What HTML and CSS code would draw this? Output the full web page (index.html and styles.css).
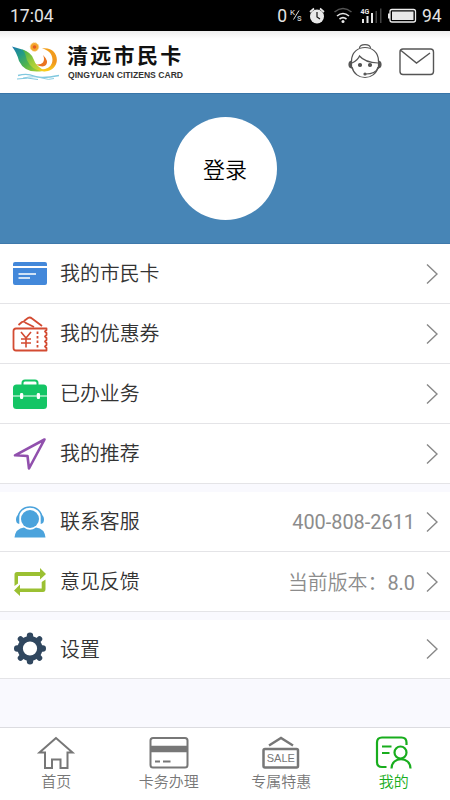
FILE: index.html
```
<!DOCTYPE html>
<html lang="zh-CN">
<head>
<meta charset="utf-8">
<title>清远市民卡</title>
<link rel="stylesheet" href="styles.css">
</head>
<body>
<div class="status">
  <span class="time">17:04</span>
  <span class="rate">0</span>
  <svg class="status-icons" width="129" height="31" viewBox="0 0 129 31">
    <g fill="#e8e8e8" font-family="Roboto, sans-serif">
      <text x="1" y="15" font-size="8">K</text><text x="8" y="21" font-size="9">s</text>
      <path d="M4.500 19.500L10 10.500" stroke="#ddd"/>
      <circle cx="28" cy="16.500" r="7"/>
      <path d="M21 12L25 8.500M31 8.500L35 12" stroke="#e8e8e8" stroke-width="1.700"/>
      <path d="M28 12V17L31 19" fill="none" stroke="#111" stroke-width="1.200"/>
      <g fill="none" stroke-width="1.600"><path d="M45.500 12Q54 5 62.500 12" stroke="#555"/><path d="M48 16Q54 11 60 16M50.500 19Q54 16.300 57.500 19" stroke="#e8e8e8"/></g>
      <circle cx="54" cy="21.500" r="1.500"/>
      <text x="71.500" y="14" font-size="7" font-weight="bold">4G</text>
      <path d="M73 19h2v4h-2zM77.500 16h2v7h-2zM82 13h2v10h-2z"/><path d="M86.500 11h1.500v12h-1.500zM91 8.500h1.500v14.500h-1.500z" fill="#444"/>
      <rect x="101" y="9.500" width="25.500" height="12.500" rx="2" fill="none" stroke="#eee" stroke-width="1.300"/>
      <rect x="103" y="11.500" width="21.500" height="8.500"/><path d="M99 13.500h2v5h-2z"/>
    </g>
  </svg>
  <span class="level">94</span>
</div>
<header class="header">
  <svg class="logo" width="50" height="42" viewBox="0 0 50 42">
    <defs>
      <linearGradient id="leaf" x1="0" y1="0" x2="1" y2="1"><stop offset="0" stop-color="#1c78b0"/><stop offset=".3" stop-color="#239b87"/><stop offset=".6" stop-color="#52b54a"/><stop offset="1" stop-color="#bdd629"/></linearGradient>
      <linearGradient id="leaf2" x1="0" y1="0" x2="1" y2="1"><stop offset="0" stop-color="#3fae4c"/><stop offset=".5" stop-color="#9ccc3a"/><stop offset="1" stop-color="#e3dc2c"/></linearGradient>
      <linearGradient id="sun" x1="0" y1="0" x2="0" y2="1"><stop offset="0" stop-color="#f2a01d"/><stop offset=".6" stop-color="#f0951d"/><stop offset="1" stop-color="#fad01d"/></linearGradient>
    </defs>
    <path d="M1 5.500L13 9Q18 14 20 20Q23 27 32 30Q14 33 8 20Q6 12 1 5.500Z" fill="url(#leaf)"/>
    <path d="M11 8.500Q20 11 22.500 18Q25 26 35 30Q25 31 19 24Q15 19 14.500 14Q13.500 10.500 11 8.500Z" fill="url(#leaf2)"/>
    <path d="M31 7.500C48 5 51 26 37 30Q31 31.500 26 28Q38 30 41 22C43 14 38 9 31 7.500Z" fill="url(#sun)"/>
    <path d="M32 14Q38 20 35 24Q32 27 25 23.500Q30 24 32 21.500Q34 18 32 14Z" fill="#ea7420"/>
    <circle cx="23.500" cy="6" r="4.200" fill="#f4a52b" stroke="#f8cf79" stroke-width="1" stroke-dasharray="1.500 1"/><circle cx="23.500" cy="6" r="1.800" fill="#e45b20"/>
    <g fill="none" stroke="#80c8df" stroke-width="1.300"><path d="M7 34.500Q16 32 23 35T48 34.500"/><path d="M12 37Q24 34.500 31 37T43 37.500" stroke-width=".9"/><path d="M6 38Q17 36 27 38.500" stroke-width="1"/></g>
  </svg>
  <div class="brand"><div class="brand-cn">清远市民卡</div><div class="brand-en">QINGYUAN CITIZENS CARD</div></div>
  <svg class="agent" width="34" height="38" viewBox="0 0 34 38" fill="none" stroke="#555" stroke-width="1.200">
    <path d="M11.500 5C12 .500 22 .500 22.500 5"/><path d="M3.500 18C3.500 0 30.500 0 30.500 18M4 24C7 38 27 38 30 24"/>
    <path d="M4 20Q10 17 11.500 13Q17 19.500 30 20"/>
    <path d="M3.500 18V25Q1 24.500 1 21.500T3.500 18ZM30.500 18V25Q33 24.500 33 21.500T30.500 18Z" fill="#555"/>
    <circle cx="12" cy="22" r="1.500" fill="#555"/><circle cx="22" cy="22" r="1.500" fill="#555"/><path d="M30.500 25Q27 31 18 31"/><circle cx="17" cy="31" r="1" fill="#555"/>
  </svg>
  <svg class="mail" width="36" height="28" viewBox="0 0 36 28" fill="none" stroke="#555" stroke-width="1.400"><rect x="1" y="1" width="33.500" height="25.500" rx="3"/><path d="M2 2.500L17.500 15L31 5"/></svg>
</header>
<section class="hero"><button class="login">登录</button></section>
<main>
  <div class="group">
    <div class="row">
      <svg class="icon" viewBox="0 0 36 36"><path d="M1 10V8Q1 6 3 6H33Q35 6 35 8V10ZM1 12H35V27Q35 29 33 29H3Q1 29 1 27Z" fill="#4388da"/><path d="M6.500 18H24M6.500 22H18" stroke="#fff" stroke-width="1.700"/></svg>
      <span class="label">我的市民卡</span><svg class="chev" viewBox="0 0 12 20"><path d="M1 0.500L11 10L1 19.500"/></svg>
    </div>
    <div class="row">
      <svg class="icon" viewBox="0 0 36 36" fill="none" stroke="#d34b32" stroke-width="1.800" stroke-linejoin="round"><path d="M6.500 9L10 6Q12 5 14 7L22 11M12 5L16 2Q18 .700 20 2.500L30 10"/><path d="M34.500 12.500H4Q1.500 12.500 1.500 15V32Q1.500 34.500 4 34.500H34.500V32L33 30.500L34.500 29V27L33 25.500L34.500 24V22L33 20.500L34.500 19V17L33 15.500L34.500 14Z"/><path d="M9 16L14 22L19 16M14 22V31.500M9 23H19M9 27H19" stroke-width="1.600"/><path d="M25.500 15.500V33" stroke-dasharray="2.500 2"/></svg>
      <span class="label">我的优惠券</span><svg class="chev" viewBox="0 0 12 20"><path d="M1 0.500L11 10L1 19.500"/></svg>
    </div>
    <div class="row">
      <svg class="icon" viewBox="0 0 36 36"><path d="M10.500 10V7Q10.500 4.500 13 4.500H23Q25.500 4.500 25.500 7V10" fill="none" stroke="#14c565" stroke-width="2"/><rect x="1" y="8.500" width="34" height="24.500" rx="3.500" fill="#14c565"/><path d="M1 20H35" stroke="#fff" stroke-width="1.200"/><rect x="8" y="17" width="3.200" height="6" rx="1.200" fill="#fff"/><rect x="24.800" y="17" width="3.200" height="6" rx="1.200" fill="#fff"/></svg>
      <span class="label">已办业务</span><svg class="chev" viewBox="0 0 12 20"><path d="M1 0.500L11 10L1 19.500"/></svg>
    </div>
    <div class="row">
      <svg class="icon" viewBox="0 0 36 36"><path d="M32.500 3.500L3 19.300L15.500 20L17 32.500Z" fill="none" stroke="#9150ad" stroke-width="2.600" stroke-linejoin="round"/></svg>
      <span class="label">我的推荐</span><svg class="chev" viewBox="0 0 12 20"><path d="M1 0.500L11 10L1 19.500"/></svg>
    </div>
  </div>
  <div class="group">
    <div class="row">
      <svg class="icon" viewBox="0 0 36 36" fill="#4ba3dc"><circle cx="18" cy="15" r="9"/><path d="M6 15C6-1 30-1 30 15" fill="none" stroke="#4ba3dc" stroke-width="1.600"/><path d="M7.300 10.500V20Q4 19.500 4 15.500T7.300 10.500ZM28.700 10.500V20Q32 19.500 32 15.500T28.700 10.500ZM2.500 33.500Q3.500 24.500 12 23.500Q18 28 24 23.500Q32.500 24.500 33.500 33.500Z"/></svg>
      <span class="label">联系客服</span><span class="value">400-808-2611</span><svg class="chev" viewBox="0 0 12 20"><path d="M1 0.500L11 10L1 19.500"/></svg>
    </div>
    <div class="row">
      <svg class="icon" viewBox="0 0 36 36" fill="#9bc032"><path d="M2.500 22V10.500Q2.500 8 5 8H28V4L34 10L28 15.500V12H6V19.500ZM33.500 15.500V25Q33.500 28 31 28H8V32L2 26.500L8 20.500V24.500H29.700V18Z"/></svg>
      <span class="label">意见反馈</span><span class="value">当前版本：<span class="ver">8.0</span></span><svg class="chev" viewBox="0 0 12 20"><path d="M1 0.500L11 10L1 19.500"/></svg>
    </div>
  </div>
  <div class="group">
    <div class="row last">
      <svg class="icon" viewBox="0 0 36 36"><circle cx="18" cy="17.500" r="9.800" fill="none" stroke="#30475f" stroke-width="5.400"/><g stroke="#30475f" stroke-width="6.400" stroke-linecap="round" stroke-linejoin="round"><path d="M18 6V4.700M18 29V30.300M6.500 17.500H5.200M29.500 17.500H30.800"/><path d="M9.500 9L8.500 8M26.500 9L27.500 8M9.500 26L8.500 27M26.500 26L27.500 27" stroke-width="5.500"/></g></svg>
      <span class="label">设置</span><svg class="chev" viewBox="0 0 12 20"><path d="M1 0.500L11 10L1 19.500"/></svg>
    </div>
  </div>
</main>
<nav class="tabs">
  <div class="tab"><svg viewBox="0 0 40 34" fill="none" stroke="#777" stroke-width="2"><path d="M20 2L3.500 16.500H9V32H16V23.500H24.500V32H31.500V16.500H36.500Z"/></svg><span>首页</span></div>
  <div class="tab"><svg viewBox="0 0 40 34" fill="none" stroke="#777" stroke-width="2"><rect x="1.500" y="2" width="37" height="29.500" rx="2.500"/><path d="M1 13H39" stroke-width="6.500"/><path d="M6 25.500H11M14 25.500H21.500"/></svg><span>卡务办理</span></div>
  <div class="tab"><svg viewBox="0 0 40 34" fill="none" stroke="#777" stroke-width="2"><path d="M8 9.500L20 2L32 9.500" stroke-width="2.400"/><rect x="2.500" y="13" width="34.500" height="18.500" rx="1.500" stroke-width="2.500"/><text x="19.800" y="26.200" text-anchor="middle" class="sale">SALE</text></svg><span>专属特惠</span></div>
  <div class="tab active"><svg viewBox="0 0 40 34" fill="none" stroke="#18ad1d" stroke-width="2.200"><path d="M12.500 31H8Q3 31 3 26V6.500Q3 1.500 8 1.500H27.500Q32.500 1.500 32.500 6.500V9M8 10.500H17.500M8 17H15.500"/><circle cx="26.500" cy="16.500" r="6"/><path d="M17.500 32.500C17.500 20 36.500 20 36.500 32.500"/></svg><span>我的</span></div>
</nav>
</body>
</html>
```
FILE: styles.css
```
* { box-sizing: border-box; }
body {
  margin: 0;
  width: 450px;
  height: 800px;
  display: flex;
  flex-direction: column;
  overflow: hidden;
  background: #f9f9fe;
  color: #333;
  font-family: Roboto, "Noto Sans CJK SC", sans-serif;
  font-weight: 350;
}
svg { display: block; flex: none; }
.status {
  flex: none;
  height: 31px;
  background: #000;
  color: #e4e4e4;
  display: flex;
  align-items: center;
  padding: 0 8px 0 10px;
  font-size: 17.5px;
  font-weight: 400;
}
.rate { margin-left: auto; font-size: 17.5px; }
.status-icons { margin-left: 2px; }
.level { margin-left: 4px; width: 20px; }
.header {
  flex: none;
  height: 62px;
  display: flex;
  align-items: center;
  padding: 0 15px 0 11px;
  background: linear-gradient(#eee, #fff 8px);
}
.brand { margin-left: 7px; padding-top: 1px; }
.brand-cn {
  color: #111;
  font-size: 21px;
  font-weight: 700;
  line-height: 26px;
  letter-spacing: 2.3px;
  margin-left: -1px;
  white-space: nowrap;
}
.brand-en {
  color: #333;
  font: 700 8.6px/13px "Liberation Sans", sans-serif;
  white-space: nowrap;
}
.agent { margin-left: auto; }
.mail { margin-left: 17px; }
.hero {
  flex: none;
  height: 151px;
  background: #4785b6;
  border-top: 1px solid #3975a8;
  border-bottom: 1px solid #3e79ab;
  display: flex;
  align-items: center;
  justify-content: center;
}
.login {
  width: 103px;
  height: 103px;
  border: 0;
  border-radius: 50%;
  background: #fff;
  color: #000;
  font: inherit;
  font-size: 22px;
  padding: 0 0 1px;
}
.group { background: #fff; margin-bottom: 8px; }
.row {
  height: 60px;
  display: flex;
  align-items: center;
  padding: 0 12px;
  border-bottom: 1px solid #e4e4e7;
}
.last { height: 59px; }
.icon { width: 36px; height: 36px; }
.label { margin-left: 12px; padding-top: 3px; font-size: 19.9px; line-height: 28px; }
.value { margin-left: auto; margin-right: 11px; padding-top: 1px; color: #8c8c8c; font-size: 19.9px; font-weight: 400; }
.value:has(.ver) { font-weight: 350; padding-top: 0; }
.ver { font-weight: 400; }
.chev {
  width: 12px;
  height: 20px;
  margin-left: auto;
  fill: none;
  stroke: #888;
  stroke-width: 1.4;
}
.value + .chev { margin-left: 0; }
.tabs {
  flex: none;
  height: 73px;
  margin-top: auto;
  border-top: 1px solid #dcdce0;
  background: #fff;
  display: grid;
  grid-template-columns: repeat(4, 1fr);
}
.tab {
  display: flex;
  flex-direction: column;
  align-items: center;
  padding-top: 8px;
  color: #777;
  font-size: 15px;
  line-height: 24px;
}
.tab svg { width: 40px; height: 34px; }
.tab.active { color: #18ad1d; }
.sale { fill: #777; stroke: none; font: 11px "Liberation Sans", sans-serif; }
```
